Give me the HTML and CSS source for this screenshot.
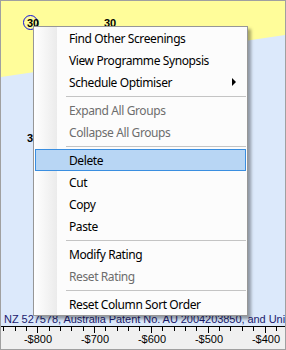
FILE: index.html
```html
<!DOCTYPE html>
<html>
<head>
  <title>Schedule Context Menu</title>
  <link rel="stylesheet" href="styles.css">
</head>
<body>
  <div class="window">
    <div class="chart">
      <svg class="chart-bg" width="284" height="325" viewBox="0 0 284 325">
        <rect x="0" y="0" width="284" height="325" fill="#dce9fb"/>
        <polygon points="0,0 284,0 284,34 0,76" fill="#fffd9a"/>
        <circle cx="29.5" cy="21.5" r="7" fill="none" stroke="#1010e0" stroke-width="1"/>
        <text class="cell-label" x="32" y="26" text-anchor="middle">30</text>
        <text class="cell-label" x="109" y="26" text-anchor="middle">30</text>
        <text class="cell-label" x="32" y="141" text-anchor="middle">30</text>
      </svg>
      <div class="patent">NZ 527578, Australia Patent No. AU 2004203850, and Uni</div>
    </div>
    <div class="axis">
      <svg width="284" height="23" viewBox="0 0 284 23">
        <line x1="0" y1="0.5" x2="284" y2="0.5" stroke="#000"/>
        <g stroke="#000">
          <line x1="2.5" y1="0" x2="2.5" y2="5"/>
          <line x1="14.5" y1="0" x2="14.5" y2="5"/>
          <line x1="25.5" y1="0" x2="25.5" y2="5"/>
          <line x1="36.5" y1="0" x2="36.5" y2="7"/>
          <line x1="48.5" y1="0" x2="48.5" y2="5"/>
          <line x1="59.5" y1="0" x2="59.5" y2="5"/>
          <line x1="70.5" y1="0" x2="70.5" y2="5"/>
          <line x1="82.5" y1="0" x2="82.5" y2="5"/>
          <line x1="93.5" y1="0" x2="93.5" y2="7"/>
          <line x1="104.5" y1="0" x2="104.5" y2="5"/>
          <line x1="116.5" y1="0" x2="116.5" y2="5"/>
          <line x1="127.5" y1="0" x2="127.5" y2="5"/>
          <line x1="138.5" y1="0" x2="138.5" y2="5"/>
          <line x1="150.5" y1="0" x2="150.5" y2="7"/>
          <line x1="161.5" y1="0" x2="161.5" y2="5"/>
          <line x1="173.5" y1="0" x2="173.5" y2="5"/>
          <line x1="184.5" y1="0" x2="184.5" y2="5"/>
          <line x1="195.5" y1="0" x2="195.5" y2="5"/>
          <line x1="207.5" y1="0" x2="207.5" y2="7"/>
          <line x1="218.5" y1="0" x2="218.5" y2="5"/>
          <line x1="229.5" y1="0" x2="229.5" y2="5"/>
          <line x1="241.5" y1="0" x2="241.5" y2="5"/>
          <line x1="252.5" y1="0" x2="252.5" y2="5"/>
          <line x1="264.5" y1="0" x2="264.5" y2="7"/>
          <line x1="275.5" y1="0" x2="275.5" y2="5"/>
        </g>
        <g class="axis-label" text-anchor="middle">
          <text x="37" y="17">-$800</text>
          <text x="94" y="17">-$700</text>
          <text x="151" y="17">-$600</text>
          <text x="208" y="17">-$500</text>
          <text x="265" y="17">-$400</text>
        </g>
      </svg>
    </div>

    <div class="menu">
      <div class="item">Find Other Screenings</div>
      <div class="item">View Programme Synopsis</div>
      <div class="item has-sub">Schedule Optimiser<span class="sub-arrow"></span></div>
      <div class="separator"></div>
      <div class="item disabled">Expand All Groups</div>
      <div class="item disabled">Collapse All Groups</div>
      <div class="separator"></div>
      <div class="item selected">Delete</div>
      <div class="item">Cut</div>
      <div class="item">Copy</div>
      <div class="item">Paste</div>
      <div class="separator"></div>
      <div class="item">Modify Rating</div>
      <div class="item disabled">Reset Rating</div>
      <div class="separator"></div>
      <div class="item">Reset Column Sort Order</div>
    </div>
  </div>
</body>
</html>
```

FILE: styles.css
```css
* {
  margin: 0;
  padding: 0;
  box-sizing: border-box;
}

html, body {
  width: 100%;
  height: 100%;
  background: #f0f0f0;
  overflow: hidden;
}

.window {
  position: relative;
  width: 286px;
  height: 350px;
  border: 1px solid #a0a0a0;
  display: flex;
  flex-direction: column;
  overflow: hidden;
  font-family: 'Liberation Sans', Arial, sans-serif;
}

/* Chart canvas */
.chart {
  position: relative;
  flex: 0 0 325px;
  display: flex;
  flex-direction: column;
  justify-content: flex-end;
  overflow: hidden;
}

.chart-bg {
  position: absolute;
  top: 0;
  left: 0;
}

.cell-label {
  font-family: 'Liberation Sans', Arial, sans-serif;
  font-size: 11px;
  font-weight: bold;
  fill: #000;
}

.patent {
  position: relative;
  padding-left: 3px;
  font-size: 11px;
  line-height: 13px;
  letter-spacing: -0.05px;
  color: #1b1b6e;
  white-space: nowrap;
}

/* Axis */
.axis {
  flex: 1 1 auto;
  background: #f0f0f0;
}

.axis svg {
  display: block;
}

.axis-label {
  font-family: 'Liberation Sans', Arial, sans-serif;
  font-size: 11px;
  fill: #000;
}

/* Context menu */
.menu {
  position: absolute;
  left: 32px;
  top: 25px;
  width: 215px;
  height: 290px;
  padding: 0 1px;
  border: 1px solid #979797;
  background: linear-gradient(to right, #ffffff 0, #ebebeb 23px, #fcfcfc 23px);
  box-shadow: 3px 3px 3px rgba(0, 0, 0, 0.35);
  font-family: 'Noto Sans', 'Open Sans', sans-serif;
  font-size: 12px;
  letter-spacing: -0.4px;
  color: #000;
}

.item {
  display: flex;
  align-items: center;
  height: 22px;
  padding-left: 33px;
  border: 1px solid transparent;
  white-space: nowrap;
}

.item.disabled {
  color: #6d6d6d;
}

.item.selected {
  background: #b8d6f4;
  border-color: #3a8ee0;
}

.sub-arrow {
  margin-left: auto;
  margin-right: 9px;
  width: 0;
  height: 0;
  border-top: 4px solid transparent;
  border-bottom: 4px solid transparent;
  border-left: 4px solid #000;
}

.separator {
  height: 6px;
  margin-left: 31px;
  display: flex;
  align-items: center;
}

.separator::after {
  content: '';
  flex: 1;
  height: 1px;
  background: #c4c4c4;
}
```
